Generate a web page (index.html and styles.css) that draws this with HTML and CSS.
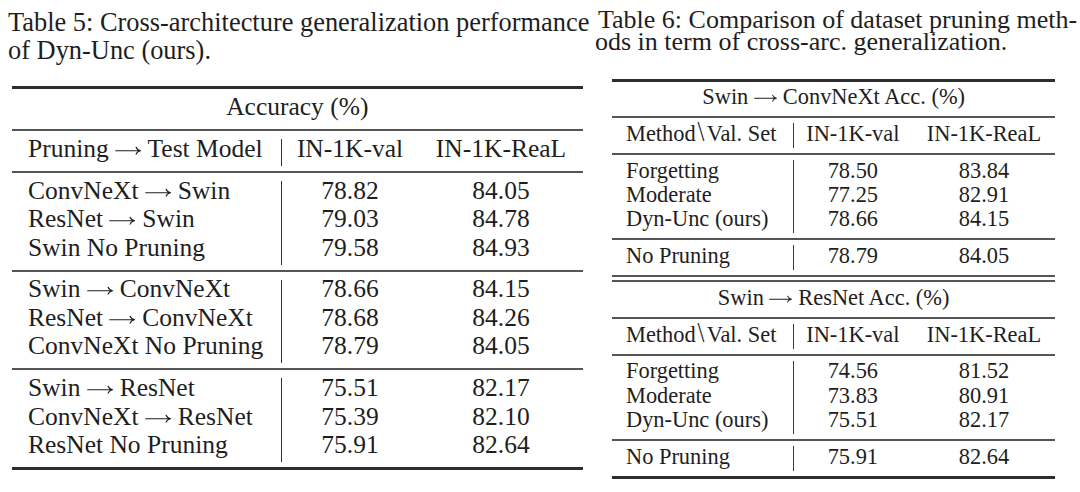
FILE: index.html
```html
<!DOCTYPE html>
<html lang="en">
<head>
<meta charset="utf-8">
<title>Tables 5 and 6</title>
<link rel="stylesheet" href="styles.css">
</head>
<body>
<main class="page">
  <section class="col col-left">
    <p class="cap cap5">Table 5: Cross-architecture generalization performance<br>of Dyn-Unc (ours).</p>
    <div class="tbl t5">
      <div class="title">Accuracy (%)</div>
      <div class="grp">
        <div class="c1"><div>Pruning <svg class="arr" viewBox="0 0 100 36" aria-hidden="true"><path d="M2 18H96M80 5C83 12 89 17 97 18C89 19 83 24 80 31"/></svg> Test Model</div></div>
        <div class="c2"><div>IN-1K-val</div></div>
        <div class="c3"><div>IN-1K-ReaL</div></div>
      </div>
      <div class="grp">
        <div class="c1">
          <div>ConvNeXt <svg class="arr" viewBox="0 0 100 36" aria-hidden="true"><path d="M2 18H96M80 5C83 12 89 17 97 18C89 19 83 24 80 31"/></svg> Swin</div>
          <div>ResNet <svg class="arr" viewBox="0 0 100 36" aria-hidden="true"><path d="M2 18H96M80 5C83 12 89 17 97 18C89 19 83 24 80 31"/></svg> Swin</div>
          <div>Swin No Pruning</div>
        </div>
        <div class="c2"><div>78.82</div><div>79.03</div><div>79.58</div></div>
        <div class="c3"><div>84.05</div><div>84.78</div><div>84.93</div></div>
      </div>
      <div class="grp">
        <div class="c1">
          <div>Swin <svg class="arr" viewBox="0 0 100 36" aria-hidden="true"><path d="M2 18H96M80 5C83 12 89 17 97 18C89 19 83 24 80 31"/></svg> ConvNeXt</div>
          <div>ResNet <svg class="arr" viewBox="0 0 100 36" aria-hidden="true"><path d="M2 18H96M80 5C83 12 89 17 97 18C89 19 83 24 80 31"/></svg> ConvNeXt</div>
          <div>ConvNeXt No Pruning</div>
        </div>
        <div class="c2"><div>78.66</div><div>78.68</div><div>78.79</div></div>
        <div class="c3"><div>84.15</div><div>84.26</div><div>84.05</div></div>
      </div>
      <div class="grp">
        <div class="c1">
          <div>Swin <svg class="arr" viewBox="0 0 100 36" aria-hidden="true"><path d="M2 18H96M80 5C83 12 89 17 97 18C89 19 83 24 80 31"/></svg> ResNet</div>
          <div>ConvNeXt <svg class="arr" viewBox="0 0 100 36" aria-hidden="true"><path d="M2 18H96M80 5C83 12 89 17 97 18C89 19 83 24 80 31"/></svg> ResNet</div>
          <div>ResNet No Pruning</div>
        </div>
        <div class="c2"><div>75.51</div><div>75.39</div><div>75.91</div></div>
        <div class="c3"><div>82.17</div><div>82.10</div><div>82.64</div></div>
      </div>
    </div>
  </section>

  <section class="col col-right">
    <p class="cap cap6"><span class="first">Table 6: Comparison of dataset pruning meth-</span><br>ods in term of cross-arc. generalization.</p>
    <div class="tbl t6">
      <div class="title">Swin <svg class="arr" viewBox="0 0 100 36" aria-hidden="true"><path d="M2 18H96M80 5C83 12 89 17 97 18C89 19 83 24 80 31"/></svg> ConvNeXt Acc. (%)</div>
      <div class="grp">
        <div class="c1"><div>Method<span class="bs">\</span>Val. Set</div></div>
        <div class="c2"><div>IN-1K-val</div></div>
        <div class="c3"><div>IN-1K-ReaL</div></div>
      </div>
      <div class="grp">
        <div class="c1"><div>Forgetting</div><div>Moderate</div><div>Dyn-Unc (ours)</div></div>
        <div class="c2"><div>78.50</div><div>77.25</div><div>78.66</div></div>
        <div class="c3"><div>83.84</div><div>82.91</div><div>84.15</div></div>
      </div>
      <div class="grp">
        <div class="c1"><div>No Pruning</div></div>
        <div class="c2"><div>78.79</div></div>
        <div class="c3"><div>84.05</div></div>
      </div>
      <div class="title title2">Swin <svg class="arr" viewBox="0 0 100 36" aria-hidden="true"><path d="M2 18H96M80 5C83 12 89 17 97 18C89 19 83 24 80 31"/></svg> ResNet Acc. (%)</div>
      <div class="grp">
        <div class="c1"><div>Method<span class="bs">\</span>Val. Set</div></div>
        <div class="c2"><div>IN-1K-val</div></div>
        <div class="c3"><div>IN-1K-ReaL</div></div>
      </div>
      <div class="grp">
        <div class="c1"><div>Forgetting</div><div>Moderate</div><div>Dyn-Unc (ours)</div></div>
        <div class="c2"><div>74.56</div><div>73.83</div><div>75.51</div></div>
        <div class="c3"><div>81.52</div><div>80.91</div><div>82.17</div></div>
      </div>
      <div class="grp">
        <div class="c1"><div>No Pruning</div></div>
        <div class="c2"><div>75.91</div></div>
        <div class="c3"><div>82.64</div></div>
      </div>
    </div>
  </section>
</main>
</body>
</html>
```

FILE: styles.css
```css
html, body {
  margin: 0;
  padding: 0;
  background: #ffffff;
}

body {
  color: #1e1e1e;
  font-family: "Liberation Serif", "Times New Roman", serif;
}

.page {
  display: flex;
  align-items: flex-start;
  width: 1080px;
  height: 492px;
  overflow: hidden;
}

.col {
  flex: none;
  box-sizing: border-box;
}

.col-left {
  width: 587px;
  padding-left: 8px;
}

.col-right {
  width: 493px;
  padding-left: 8px;
}

/* captions */
.cap {
  margin: 0;
  font-size: 26px;
  white-space: nowrap;
}

.cap5 {
  font-size: 26.4px;
  line-height: 27.6px;
  padding-top: 9px;
}

.cap6 {
  line-height: 22.4px;
  padding-top: 8.5px;
}

.cap6 .first {
  padding-left: 3px;
}

/* math-style arrow and backslash */
.arr {
  display: inline-block;
  width: 1.04em;
  height: 0.37em;
  vertical-align: 0.07em;
  fill: none;
  stroke: currentColor;
  stroke-width: 4.4;
  stroke-linecap: round;
  stroke-linejoin: round;
}

.bs {
  display: inline-block;
  font-size: 1.3em;
  line-height: 0;
  font-weight: 300;
  margin: 0 2px 0 1px;
  transform: scaleX(0.85);
}

/* tables */
.tbl {
  border-top: 3px solid #2e2e2e;
  border-bottom: 3px solid #2e2e2e;
}

.tbl .grp {
  display: grid;
}

.tbl .c2,
.tbl .c3 {
  text-align: center;
}

.tbl .title {
  text-align: center;
}

/* Table 5 */
.t5 {
  margin-top: 22.3px;
  margin-left: 3.7px;
  width: 571.3px;
  font-size: 25.5px;
  line-height: 28.5px;
}

.t5 .grp {
  grid-template-columns: 269.3px 138px 164px;
  border-top: 2px solid #555555;
}

.t5 .title,
.t5 .c1,
.t5 .c2,
.t5 .c3 {
  padding: 3.75px 0 7.5px;
}

.t5 .c1 {
  padding-left: 16.3px;
}

.t5 .c2 {
  background: linear-gradient(#333333, #333333) no-repeat 0 8px / 1.4px calc(100% - 13px);
}

/* Table 6 */
.t6 {
  margin-top: 25.2px;
  margin-left: 17.3px;
  width: 442.7px;
  font-size: 22.4px;
  line-height: 24.3px;
}

.t6 .grp {
  grid-template-columns: 180.4px 120.3px 142px;
  border-top: 2px solid #555555;
}

.t6 .title,
.t6 .c1,
.t6 .c2,
.t6 .c3 {
  padding: 3.5px 0 7px;
}

.t6 .c1 {
  padding-left: 13.7px;
}

.t6 .c2 {
  background: linear-gradient(#3a3a3a, #3a3a3a) no-repeat 0 5px / 1.2px calc(100% - 10px);
}

.t6 .title2 {
  border-top: 2px solid #555555;
  box-shadow: inset 0 3px 0 #ffffff, inset 0 5px 0 #555555;
  padding-top: 8.5px;
}
```
